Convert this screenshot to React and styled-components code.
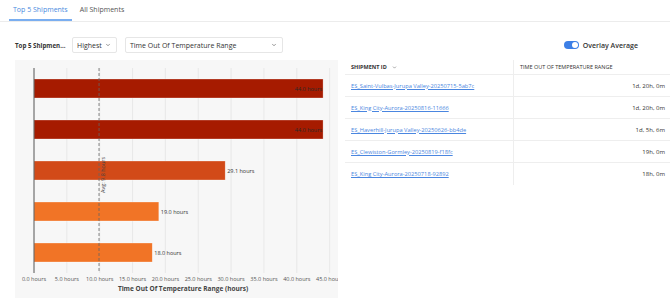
import React from 'react';
import styled, { createGlobalStyle } from 'styled-components';
import { ChevronDown } from 'lucide-react';

const GlobalStyle = createGlobalStyle`
    body {
        margin: 0;
        background: #ffffff;
        font-family: 'Open Sans', 'Liberation Sans', sans-serif;
        color: #333;
    }
`;

const Page = styled.div`
    width: 670px;
    height: 298px;
    overflow: hidden;
`;

const TabBar = styled.div`
    display: flex;
    height: 22px;
    border-bottom: 1px solid #ececec;
    padding-left: 9px;
    box-sizing: border-box;
`;

const Tab = styled.div`
    display: flex;
    align-items: center;
    padding: 0 4px;
    margin-right: 4px;
    font-size: 7px;
    color: ${(p) => (p.active ? '#4a8be0' : '#555')};
    border-bottom: 2px solid ${(p) => (p.active ? '#7aaef0' : 'transparent')};
`;

const Toolbar = styled.div`
    display: flex;
    align-items: center;
    justify-content: space-between;
    height: 16px;
    margin-top: 15px;
    padding: 0 32px 0 15px;
`;

const ToolGroup = styled.div`
    display: flex;
    align-items: center;
    gap: 6px;
`;

const ToolLabel = styled.div`
    font-size: 6.2px;
    font-weight: 700;
    color: #333;
    width: 51px;
    white-space: nowrap;
`;

const Select = styled.div`
    display: flex;
    align-items: center;
    justify-content: space-between;
    width: ${(p) => p.w}px;
    height: 16px;
    box-sizing: border-box;
    padding: 0 5px 0 4px;
    border: 1px solid #e6e6e6;
    border-radius: 2px;
    background: #fff;
    font-size: 7px;
    color: #333;
    margin-left: ${(p) => p.gap || 0}px;
`;

const ToggleWrap = styled.div`
    display: flex;
    align-items: center;
    gap: 4px;
    font-size: 7px;
    font-weight: 600;
    color: #333;
`;

const Switch = styled.div`
    width: 15px;
    height: 8px;
    border-radius: 4px;
    background: #3d7fe6;
    display: flex;
    align-items: center;
    justify-content: flex-end;
    padding: 0 1px;
    box-sizing: border-box;
`;

const Knob = styled.div`
    width: 6px;
    height: 6px;
    border-radius: 50%;
    background: #fff;
`;

const Body = styled.div`
    display: grid;
    grid-template-columns: 323px 1fr;
    gap: 7px;
    margin-top: 7px;
    padding-left: 15px;
`;

const ChartPanel = styled.div`
    background: #f7f7f7;
    height: 238px;
    overflow: hidden;
`;

const Table = styled.div`
    display: flex;
    flex-direction: column;
`;

const Row = styled.div`
    display: grid;
    grid-template-columns: 169px 1fr;
    height: ${(p) => (p.head ? 15 : 22)}px;
    border-bottom: ${(p) => (p.last ? 'none' : '1px solid #eeeeee')};
    box-sizing: border-box;
`;

const Cell = styled.div`
    display: flex;
    align-items: center;
    justify-content: ${(p) => (p.right ? 'flex-end' : 'flex-start')};
    padding: ${(p) => (p.right ? '0 5px 0 4px' : '0 4px 0 6px')};
    border-right: ${(p) => (p.divider ? '1px solid #eeeeee' : 'none')};
    font-size: ${(p) => (p.head ? 5.5 : 6)}px;
    font-weight: ${(p) => (p.bold ? 700 : 400)};
    color: #333;
    white-space: nowrap;
    gap: 5px;
`;

const Link = styled.a`
    color: #4a86e0;
    text-decoration: underline;
    font-size: 5.7px;
`;

const bars = [
    { v: 44.0, c: '#a61b00' },
    { v: 44.0, c: '#a61b00' },
    { v: 29.1, c: '#d24a18' },
    { v: 19.0, c: '#f17426' },
    { v: 18.0, c: '#f17426' },
];

const rows = [
    ['ES_Saint-Vulbas-Jurupa Valley-20250715-5ab7c', '1d, 20h, 0m'],
    ['ES_King City-Aurora-20250816-11666', '1d, 20h, 0m'],
    ['ES_Haverhill-Jurupa Valley-20250626-bb4de', '1d, 5h, 6m'],
    ['ES_Clewiston-Gormley-20250819-f18fc', '19h, 0m'],
    ['ES_King City-Aurora-20250718-92892', '18h, 0m'],
];

const X0 = 19;
const PX = 6.57;
const TOP = 8;
const BOTTOM = 213;
const BAND = (BOTTOM - TOP) / 5;

const Chart = () => (
    <svg width="323" height="238" style={{ display: 'block' }}>
        {Array.from({ length: 10 }).map((_, i) => {
            const x = X0 + i * 5 * PX;
            return (
                <g key={i}>
                    {i > 0 && <line x1={x} x2={x} y1={TOP} y2={BOTTOM} stroke="#e4e4e4" strokeWidth="0.8" />}
                    <text x={x} y={221} fontSize="5.5" fill="#555" textAnchor="middle" fontFamily="Open Sans">
                        {(i * 5).toFixed(1)} hours
                    </text>
                </g>
            );
        })}
        {bars.map((b, i) => {
            const y = TOP + i * BAND + (BAND - 19) / 2;
            const w = b.v * PX;
            const inside = b.v > 40;
            return (
                <g key={i}>
                    <rect x={X0} y={y} width={w} height={19} fill={b.c} stroke="#fff" strokeOpacity="0.5" strokeWidth="0.6" />
                    <text
                        x={inside ? X0 + w - 1 : X0 + w + 2}
                        y={y + 11.5}
                        fontSize="5.5"
                        fill={inside ? '#2a2a2a' : '#333'}
                        textAnchor={inside ? 'end' : 'start'}
                        fontFamily="Open Sans"
                    >
                        {b.v.toFixed(1)} hours
                    </text>
                </g>
            );
        })}
        <line x1={X0} x2={X0} y1={TOP} y2={BOTTOM} stroke="#555" strokeWidth="1" />
        <line x1={X0 + 9.9 * PX} x2={X0 + 9.9 * PX} y1={TOP} y2={BOTTOM} stroke="#666" strokeWidth="0.8" strokeDasharray="3 2" />
        <text
            transform={`translate(${X0 + 9.9 * PX + 6} 133) rotate(-90)`}
            fontSize="5.5"
            fill="#444"
            fontFamily="Open Sans"
        >
            Avg: 9.8 hours
        </text>
        <text x={168} y={231} fontSize="6.5" fontWeight="700" fill="#444" textAnchor="middle" fontFamily="Open Sans">
            Time Out Of Temperature Range (hours)
        </text>
    </svg>
);

const App = () => (
    <Page>
        <GlobalStyle />
        <TabBar>
            <Tab active>Top 5 Shipments</Tab>
            <Tab>All Shipments</Tab>
        </TabBar>
        <Toolbar>
            <ToolGroup>
                <ToolLabel>Top 5 Shipmen...</ToolLabel>
                <Select w={45}>
                    Highest <ChevronDown size={6} strokeWidth={2} />
                </Select>
                <Select w={158} gap={2}>
                    Time Out Of Temperature Range <ChevronDown size={6} strokeWidth={2} />
                </Select>
            </ToolGroup>
            <ToggleWrap>
                <Switch>
                    <Knob />
                </Switch>
                Overlay Average
            </ToggleWrap>
        </Toolbar>
        <Body>
            <ChartPanel>
                <Chart />
            </ChartPanel>
            <Table>
                <Row head>
                    <Cell head bold divider>
                        SHIPMENT ID <ChevronDown size={5} strokeWidth={2} />
                    </Cell>
                    <Cell head>TIME OUT OF TEMPERATURE RANGE</Cell>
                </Row>
                {rows.map((r, i) => (
                    <Row key={i} last={i === rows.length - 1}>
                        <Cell divider>
                            <Link href="#">{r[0]}</Link>
                        </Cell>
                        <Cell right>{r[1]}</Cell>
                    </Row>
                ))}
            </Table>
        </Body>
    </Page>
);

export default App;
